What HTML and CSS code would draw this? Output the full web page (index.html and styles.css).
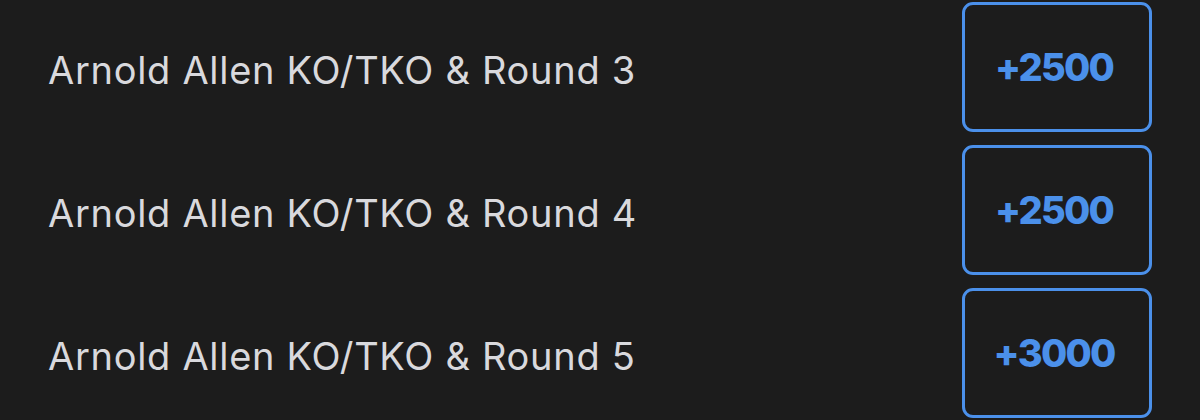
FILE: index.html
```html
<!DOCTYPE html>
<html lang="en">
<head>
  <meta charset="UTF-8">
  <title>Arnold Allen - Method &amp; Round</title>
  <meta name="viewport" content="width=device-width, initial-scale=1">
  <link rel="stylesheet" href="styles.css">
</head>
<body>
  <div class="market">
    <div class="row">
      <span class="label">Arnold Allen KO/TKO &amp; Round 3</span>
      <button class="odds">+2500</button>
    </div>
    <div class="row">
      <span class="label">Arnold Allen KO/TKO &amp; Round 4</span>
      <button class="odds">+2500</button>
    </div>
    <div class="row">
      <span class="label">Arnold Allen KO/TKO &amp; Round 5</span>
      <button class="odds">+3000</button>
    </div>
  </div>
</body>
</html>
```

FILE: styles.css
```css
body {
  margin: 0;
  background: #1c1c1c;
  font-family: Inter, "Liberation Sans", sans-serif;
}
.market {
  padding: 2px 48px 0 48px;
  display: flex; flex-direction: column;
  gap: 13px;
}
.row {
  display: flex; align-items: center; justify-content: space-between;
  height: 130px;
}
.label {
  color: #d9d9dd;
  font-size: 38px;
  letter-spacing: 0.7px;
  padding-top: 6px;
}
.odds {
  width: 190px; height: 130px;
  padding: 0 6px 0 0;
  background: transparent;
  border: 3px solid #4b90ea; border-radius: 11px;
  color: #4b90ea;
  font-family: inherit; font-size: 38px; font-weight: 800;
  letter-spacing: -1.8px;
  cursor: pointer;
}
```
